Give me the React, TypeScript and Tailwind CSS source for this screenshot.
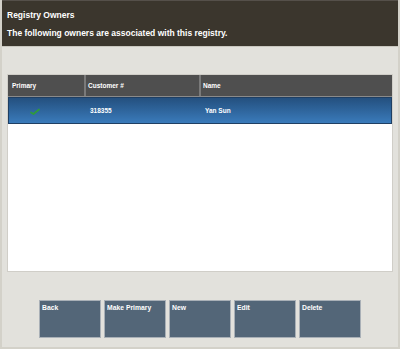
import React from "react";

const font = { fontFamily: '"Liberation Sans", Arial, sans-serif' };

export default function App() {
  const buttons = ["Back", "Make Primary", "New", "Edit", "Delete"];
  return (
    <div
      className="w-[400px] h-[349px] bg-[#e2e1dc] flex flex-col overflow-hidden border-l-2 border-r-2 border-b-2 border-[#d3d1c9]"
      style={font}
    >
      <div className="h-[46px] bg-[#3b362d] border-t border-[#55504a] px-[5px] pt-[9px] flex flex-col gap-[8px] text-white font-bold text-[8.5px] leading-[10px]">
        <div>Registry Owners</div>
        <div>The following owners are associated with this registry.</div>
      </div>
      <div className="h-px bg-[#c9c7bf]" />
      <div className="flex-1 flex flex-col pt-[27px] px-[5px]">
        <div className="h-[198px] w-[386px] bg-white border border-[#d0cec8] flex flex-col">
          <div className="h-[22px] bg-[#4f4f4f] flex text-white font-bold text-[6.5px] border-b border-[#8a8a8a]">
            <div className="w-[78px] border-r-2 border-[#7a7a7a] flex items-center pl-[4px]">Primary</div>
            <div className="w-[115px] border-r-2 border-[#7a7a7a] flex items-center pl-[2px]">Customer #</div>
            <div className="flex-1 flex items-center pl-[2px]">Name</div>
          </div>
          <div className="h-[27px] flex text-white font-bold text-[6.5px] border border-[#1f3f63] bg-gradient-to-b from-[#24507f] to-[#3a7bbb]">
            <div className="w-[78px] flex items-center pl-[21px] pt-[2px]">
              <svg width="10" height="7" viewBox="0 0 10 7">
                <path d="M1 4.5 L3.5 6 L9 1.5" stroke="#2f9a3c" strokeWidth="1.8" fill="none" strokeLinecap="round" strokeLinejoin="round" />
              </svg>
            </div>
            <div className="w-[115px] flex items-center pl-[3px]">318355</div>
            <div className="flex-1 flex items-center pl-[3px]">Yan Sun</div>
          </div>
        </div>
        <div className="flex gap-[3px] pl-[32px] pt-[28px]">
          {buttons.map((b) => (
            <div
              key={b}
              className="w-[62px] h-[38px] bg-[#536678] border border-[#a9b0b7] text-white font-bold text-[6.8px] leading-[8px] pl-[2px] pt-[3px]"
            >
              {b}
            </div>
          ))}
        </div>
      </div>
    </div>
  );
}
